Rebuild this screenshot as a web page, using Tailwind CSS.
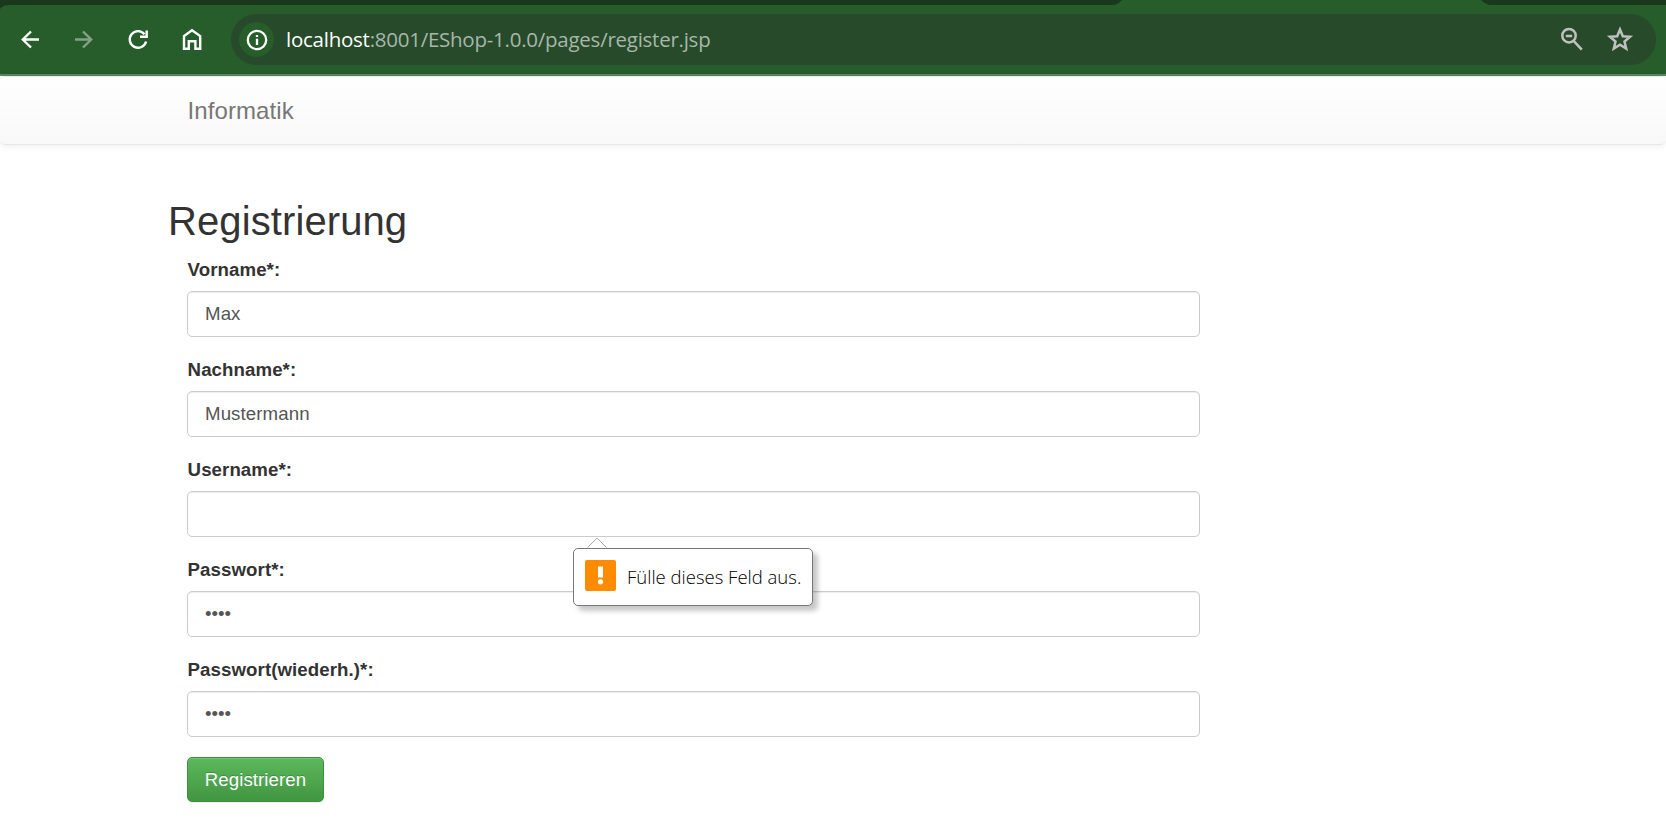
<!DOCTYPE html>
<html lang="de">
<head>
<meta charset="utf-8">
<title>Registrierung</title>
<script src="https://cdn.jsdelivr.net/npm/@tailwindcss/browser@4"></script>
</head>
<body class="h-[825px] w-[1666px] overflow-hidden bg-white font-['Liberation_Sans',Arial,sans-serif] text-[18.67px] text-[#333]">
<header class="flex h-[76px] flex-col border-b-2 border-[#5b8560] bg-[#275d2b]">
  <div class="flex h-[5px] shrink-0 justify-between">
    <svg class="h-[9px] w-[1122px]" viewBox="0 0 1122 9" fill="#1a381b"><path d="M0 0H1122Q1118 5 1112 5H9Q3 5 0 9Z"/></svg>
    <svg class="h-[5px] w-[185px]" viewBox="0 0 185 5" fill="#1a381b"><path d="M0 0H185V5H10Q5 5 0 0Z"/></svg>
  </div>
  <div class="flex flex-1 items-center pr-[10px]">
    <nav class="flex h-[51px] w-[231px] shrink-0 items-center">
      <svg class="h-[51px] w-[231px]" viewBox="0 14 231 51" fill="none" stroke="#fff" stroke-width="2.4">
        <path d="M39 39.5H22.5M31 31.5L22.8 39.5L31 47.5"/>
        <path d="M75 39.5H91.5M83 31.5L91.2 39.5L83 47.5" stroke="#84a286"/>
        <path d="M144.5 34.2A8.3 8.3 0 1 0 146.1 41.5M146.7 30.5V36.8H140"/>
        <path d="M184 48.7V36L192 30.2L200.2 36V48.7H195.4V41.2H188.8V48.7Z"/>
      </svg>
    </nav>
    <div class="flex h-[51px] flex-1 items-center rounded-full bg-[#264a2a] pl-[8px] pr-[20px]">
      <div class="flex size-[35px] items-center justify-center rounded-full bg-[#275d2b]">
        <svg class="size-[22px]" viewBox="0 0 22 22" fill="none" stroke="#fff" stroke-width="2.3"><circle cx="11" cy="11" r="9.2"/><path d="M11 9.8V16M11 6V8.1"/></svg>
      </div>
      <div class="mb-[2px] ml-[12px] flex-1 whitespace-nowrap font-['Open_Sans','Noto_Sans',sans-serif] text-[20.5px] leading-[28px] text-[#a8b7aa]"><span class="tracking-[-0.25px] text-white">localhost</span><span class="tracking-[-0.25px]">:8001/EShop-1.0.0/pages/register.jsp</span></div>
      <svg class="mb-[7px] h-[32px] w-[74px] overflow-visible" viewBox="0 0 74 32" fill="none" stroke="#bfc1bf" stroke-width="2.5">
        <circle cx="7" cy="15.7" r="6.7"/><path d="M3.8 15.9H10.2M11.6 20.8L19.8 29.7"/>
        <path d="M58 9.5L60.8 16.2L68 16.8L62.5 21.5L64.2 28.6L58 24.8L51.8 28.6L53.5 21.5L48 16.8L55.2 16.2Z"/>
      </svg>
    </div>
  </div>
</header>
<div class="h-[69px] rounded-[5px] border-b border-t border-[#e7e7e7] bg-linear-to-b from-white to-[#f8f8f8] pl-[187.5px] shadow-[0_1px_7px_rgba(0,0,0,0.075)]">
  <a class="block pt-[16px] text-[24px] leading-[36px] tracking-[0.1px] text-[#777]">Informatik</a>
</div>
<main class="w-[1200px] pl-[187px] pt-[54px]">
  <h1 class="ml-[-19px] text-[40px] leading-[44px] tracking-[0.1px]">Registrierung</h1>
  <form class="pt-[14px]">
    <div class="h-[100px]"><label class="block h-[34px] pl-[0.6px] font-bold leading-[26px] tracking-[0.08px]">Vorname*:</label><div class="h-[46px] rounded-[5px] border border-[#ccc] px-[17px] leading-[43px] tracking-[0.1px] text-[#555] shadow-[inset_0_1px_1px_rgba(0,0,0,0.075)]">Max</div></div>
    <div class="h-[100px]"><label class="block h-[34px] pl-[0.6px] font-bold leading-[26px] tracking-[0.08px]">Nachname*:</label><div class="h-[46px] rounded-[5px] border border-[#ccc] px-[17px] leading-[43px] tracking-[0.1px] text-[#555] shadow-[inset_0_1px_1px_rgba(0,0,0,0.075)]">Mustermann</div></div>
    <div class="relative h-[100px]"><label class="block h-[34px] pl-[0.6px] font-bold leading-[26px] tracking-[0.08px]">Username*:</label><div class="h-[46px] rounded-[5px] border border-[#ccc] shadow-[inset_0_1px_1px_rgba(0,0,0,0.075)]"></div>
      <div class="absolute left-[386px] top-[91px] z-10 flex h-[58px] w-[240px] items-center rounded-[5px] border border-[#777] bg-white pl-[11px] shadow-[5px_5px_5px_rgba(0,0,0,0.22)]">
        <svg class="absolute left-[12px] top-[-12px] h-[11px] w-[22px]" viewBox="0 0 22 11" fill="#fff" stroke="#aaa"><path d="M1.5 10.5L11 1L20.5 10.5"/></svg>
        <svg class="mb-[3px] size-[31px] shrink-0" viewBox="0 0 31 31"><rect width="31" height="31" rx="2" fill="#ff8c00"/><path d="M13 6.5H18V17.5H13Z" fill="#fff"/><circle cx="15.5" cy="21.8" r="2.6" fill="#fff"/></svg>
        <span class="ml-[11px] whitespace-nowrap font-['Open_Sans','Noto_Sans',sans-serif] text-[18.5px] font-light text-black">Fülle dieses Feld aus.</span>
      </div>
    </div>
    <div class="h-[100px]"><label class="block h-[34px] pl-[0.6px] font-bold leading-[26px] tracking-[0.08px]">Passwort*:</label><div class="h-[46px] rounded-[5px] border border-[#ccc] px-[17px] leading-[43px] text-[#555] shadow-[inset_0_1px_1px_rgba(0,0,0,0.075)]">••••</div></div>
    <div class="h-[100px]"><label class="block h-[34px] pl-[0.6px] font-bold leading-[26px] tracking-[0.08px]">Passwort(wiederh.)*:</label><div class="h-[46px] rounded-[5px] border border-[#ccc] px-[17px] leading-[43px] text-[#555] shadow-[inset_0_1px_1px_rgba(0,0,0,0.075)]">••••</div></div>
    <button type="button" class="block h-[45px] w-[137px] rounded-[5px] border border-[#3e8f3e] bg-linear-to-b from-[#5cb85c] to-[#419641] tracking-[0.08px] text-white text-shadow-[0_-1px_0_rgba(0,0,0,0.2)] shadow-[inset_0_1px_0_rgba(255,255,255,0.15),0_1px_1px_rgba(0,0,0,0.075)]">Registrieren</button>
  </form>
</main>
</body>
</html>
